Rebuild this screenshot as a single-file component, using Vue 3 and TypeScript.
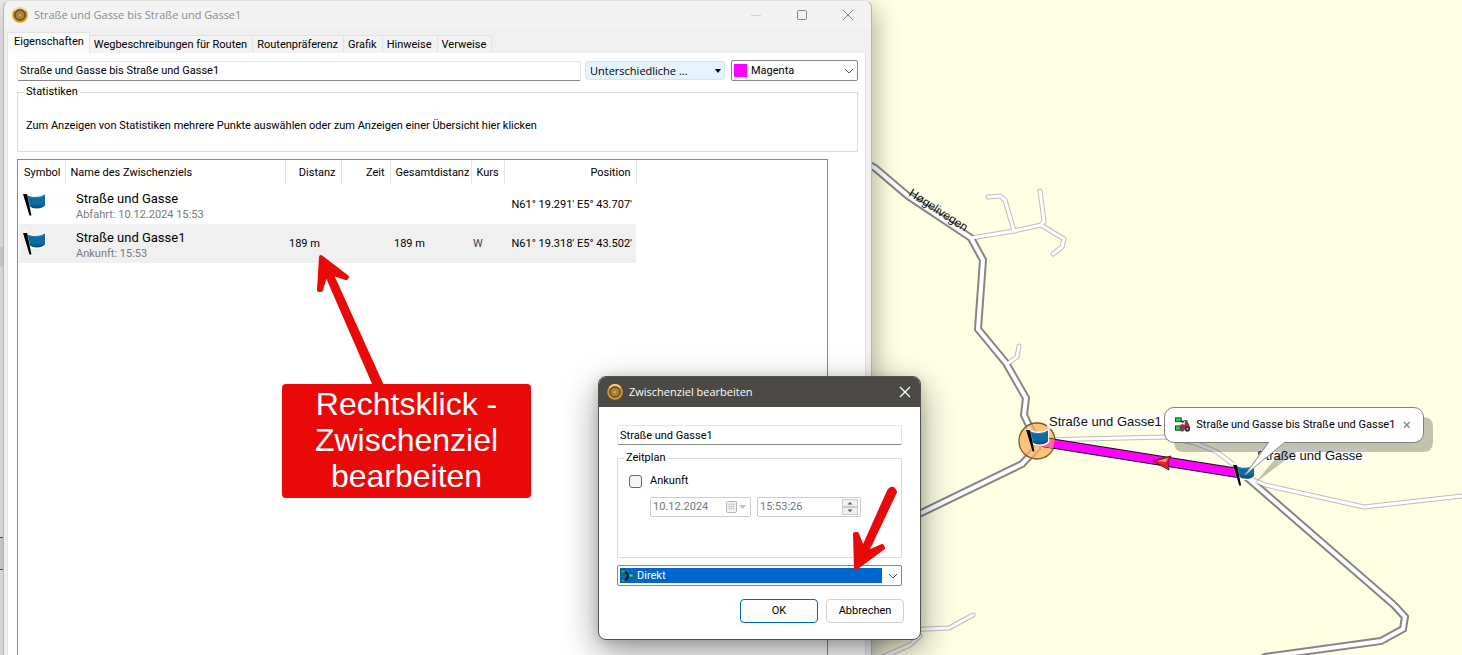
<script setup lang="ts">
import { ref } from 'vue'

interface Waypoint {
  name: string
  note: string
  distance: string
  time: string
  total: string
  course: string
  position: string
}

const tabs: string[] = [
  'Eigenschaften',
  'Wegbeschreibungen für Routen',
  'Routenpräferenz',
  'Grafik',
  'Hinweise',
  'Verweise',
]
const activeTab = ref(0)
const selectedRow = ref(1)
const routeName = ref('Straße und Gasse bis Straße und Gasse1')
const waypointName = ref('Straße und Gasse1')
const arrival = ref(false)

const waypoints: Waypoint[] = [
  {
    name: 'Straße und Gasse',
    note: 'Abfahrt: 10.12.2024 15:53',
    distance: '',
    time: '',
    total: '',
    course: '',
    position: "N61° 19.291' E5° 43.707'",
  },
  {
    name: 'Straße und Gasse1',
    note: 'Ankunft: 15:53',
    distance: '189 m',
    time: '',
    total: '189 m',
    course: 'W',
    position: "N61° 19.318' E5° 43.502'",
  },
]

const mainRoads: string[] = [
  'M866 163 L875 168 L908 196 L971 238 L983 260 L978 329 L1006 363 L1026 398 L1024 415 L1035 438 L1037 448 L1022 464 L915 516',
  'M1243 474 L1394 605 L1405 617 L1403 629 L1381 641 L1265 657',
]
const sideRoads: string[] = [
  'M971 238 L1014 231 L1041 225 L1064 239 L1062 247 L1053 254',
  'M1014 231 L1005 200 L1000 196 L988 197',
  'M1041 225 L1044 221 L1040 191',
  'M1007 364 L1017 357 L1019 346',
  'M1040 440 L1165 437 L1195 443 L1217 452 L1234 465 L1247 477 L1265 485 L1364 507 L1470 495',
  'M905 630 L949 628 L973 615',
  'M920 636 L910 645 L880 658',
]
</script>

<template>
  <main class="desktop">
    <svg class="canvas" viewBox="0 0 1462 655" preserveAspectRatio="xMinYMin slice" role="img" aria-label="Karte">
      <defs>
        <linearGradient id="flagFill" x1="0" y1="0" x2="0" y2="1">
          <stop offset="0" stop-color="#0f5f96" />
          <stop offset="0.6" stop-color="#0b70ac" />
          <stop offset="1" stop-color="#07486f" />
        </linearGradient>
        <symbol id="flag" viewBox="0 0 24 24" overflow="visible">
          <path d="M3.500 1.500 Q6 4 12 4 Q18 4 22 1.500 V12.500 Q19 15.500 14 15.500 Q9 15.500 6 13 Z" fill="url(#flagFill)" stroke="#fff" stroke-width="2.500" paint-order="stroke" />
          <path d="M5 3.500 Q13 6.500 21.500 3" fill="none" stroke="#2b83b8" stroke-width="1" />
          <path d="M0 1 L4 1 L8.500 22.500 L6.500 22.500 Z" fill="#000" stroke="#fff" stroke-width="0.500" paint-order="stroke" />
        </symbol>
        <symbol id="globe" viewBox="0 0 16 16">
          <circle cx="8" cy="8" r="7.800" fill="#e8940f" />
          <path d="M2.500 3.500 A7 7 0 0 1 13.500 3.500" fill="none" stroke="#ffdf92" stroke-width="1.500" />
          <circle cx="8" cy="8" r="5.800" fill="#414d50" />
          <circle cx="8" cy="8" r="4.600" fill="#717b6c" />
          <circle cx="8" cy="8" r="3.800" fill="#c98a23" />
          <path d="M4.500 8 H11.500 M8 4.500 V11.500 M5.500 5.500 L10.500 10.500 M10.500 5.500 L5.500 10.500" stroke="#7d6435" stroke-width="0.700" />
          <circle cx="8" cy="8" r="1.500" fill="#e79e2c" />
        </symbol>
      </defs>
      <g fill="none" stroke-linejoin="round" stroke-linecap="round">
        <path v-for="d in sideRoads" :key="'e' + d" :d="d" stroke="#bdbdbd" stroke-width="5" />
        <path v-for="d in mainRoads" :key="'m' + d" :d="d" stroke="#858585" stroke-width="8" stroke-linejoin="miter" />
        <path v-for="d in sideRoads" :key="'i' + d" :d="d" stroke="#fff" stroke-width="3" />
        <path v-for="d in mainRoads" :key="'n' + d" :d="d" stroke="#fff" stroke-width="4" stroke-linejoin="miter" />
      </g>
      <text class="map-text street" transform="translate(908 195) rotate(33)">Høgelivegen</text>
      <circle cx="1037" cy="441" r="18" fill="#ffad55" fill-opacity="0.75" stroke="#7d5a2c" stroke-width="1.300" />
      <path d="M1043 442 L1238 473" stroke="#111" stroke-width="10" />
      <path d="M1043 442 L1238 473" stroke="#f0f" stroke-width="8" />
      <path d="M1037 441 L1054 444" stroke="#ff6d8e" stroke-width="9" />
      <path d="M1153 461 L1171 456 L1168 462 L1169 470 Z" fill="#e3222d" stroke="#6b1018" />
      <path d="M1157 461 L1168 458 L1166 462 Z" fill="#ff8c8c" />
      <rect x="1047" y="414" width="118" height="15" rx="3" fill="#fff" fill-opacity="0.8" />
      <text class="map-text" x="1049" y="426">Straße und Gasse1</text>
      <rect x="1255" y="448" width="112" height="16" rx="3" fill="#fff" fill-opacity="0.8" />
      <text class="map-text" x="1257" y="460">Straße und Gasse</text>
      <use href="#flag" x="1026" y="429" width="24" height="24" />
      <use href="#flag" x="1233" y="464" width="23" height="23" />
      <path d="M1184 417 H1423 Q1433 417 1433 427 V442 Q1433 452 1423 452 H1296 L1254 484 L1281 452 H1184 Q1174 452 1174 442 V427 Q1174 417 1184 417 Z" fill="#000" fill-opacity="0.24" />
      <path d="M1270 440 L1245 475 L1287 440 Z" fill="#fff" stroke="#888" />
    </svg>

    <aside class="callout">
      <svg class="callout-icon" viewBox="0 0 16 16" aria-hidden="true">
        <path d="M5 3 L9 5 M5 11 H8" stroke="#222" stroke-width="2" fill="none" />
        <rect x="0.500" y="0.500" width="6" height="4" fill="#27d34a" stroke="#164d20" />
        <rect x="0.500" y="9" width="5" height="4.500" fill="#27d34a" stroke="#164d20" />
        <path d="M5 8 L8 7 L10 8 L10.500 3.500 L13 4 L15 8 L15.500 11 L6 12.500 Z" fill="#b92737" />
        <path d="M9 3.500 H13" stroke="#555" stroke-width="1.200" />
        <circle cx="7.500" cy="12.500" r="2.500" fill="#54545c" />
        <circle cx="13" cy="12" r="3" fill="#33333a" />
        <circle cx="13" cy="12" r="1" fill="#bbb" />
      </svg>
      <span>Straße und Gasse bis Straße und Gasse1</span>
      <button class="callout-close" type="button" aria-label="Hinweis schließen">
        <svg viewBox="0 0 8 8" aria-hidden="true"><path d="M1 1 L7 7 M7 1 L1 7" stroke="#8a8a8a" stroke-width="1.500" /></svg>
      </button>
    </aside>
    <svg class="canvas overlay" viewBox="0 0 1462 655" preserveAspectRatio="xMinYMin slice" aria-hidden="true">
      <path d="M1270 441 L1245 475 L1286 441 Z" fill="#fff" />
      <path d="M1269 442 L1245 475 L1285 442" fill="none" stroke="#999" />
    </svg>

    <div class="edge" aria-hidden="true"><i></i><b></b></div>

    <section class="window">
      <header class="titlebar">
        <svg class="app-icon" aria-hidden="true"><use href="#globe" /></svg>
        <h1>Straße und Gasse bis Straße und Gasse1</h1>
        <button type="button" aria-label="Minimieren">
          <svg viewBox="0 0 12 12" aria-hidden="true"><path d="M1 6.500 H11" stroke="#d6d6d6" /></svg>
        </button>
        <button type="button" aria-label="Maximieren">
          <svg viewBox="0 0 12 12" aria-hidden="true"><rect x="1.500" y="1.500" width="9" height="9" rx="1" fill="none" stroke="#858585" /></svg>
        </button>
        <button type="button" aria-label="Schließen">
          <svg viewBox="0 0 12 12" aria-hidden="true"><path d="M1 1 L11 11 M11 1 L1 11" stroke="#858585" /></svg>
        </button>
      </header>

      <nav class="tabs" role="tablist">
        <button
          v-for="(tab, i) in tabs"
          :key="tab"
          type="button"
          role="tab"
          :aria-selected="i === activeTab"
          :class="['tab', { active: i === activeTab }]"
          @click="activeTab = i"
        >{{ tab }}</button>
      </nav>

      <div class="panel">
        <div class="toolbar">
          <input v-model="routeName" class="field name" type="text" aria-label="Routenname" />
          <button class="activity" type="button">
            <span>Unterschiedliche ...</span>
            <svg viewBox="0 0 6 4" aria-hidden="true"><path d="M0 0 H6 L3 4 Z" /></svg>
          </button>
          <label class="combo color">
            <i class="swatch"></i>
            <select aria-label="Farbe">
              <option>Magenta</option>
            </select>
            <svg class="chevron" viewBox="0 0 10 6" aria-hidden="true"><path d="M1 1 L5 5 L9 1" fill="none" stroke="#555" /></svg>
          </label>
        </div>

        <fieldset class="group stats">
          <legend>Statistiken</legend>
          <p>Zum Anzeigen von Statistiken mehrere Punkte auswählen oder zum Anzeigen einer Übersicht hier klicken</p>
        </fieldset>

        <div class="list">
          <table>
            <colgroup>
              <col class="c-symbol" /><col class="c-name" /><col class="c-dist" /><col class="c-time" /><col class="c-total" /><col class="c-course" /><col class="c-pos" />
            </colgroup>
            <thead>
              <tr>
                <th scope="col">Symbol</th>
                <th scope="col">Name des Zwischenziels</th>
                <th scope="col" class="end">Distanz</th>
                <th scope="col" class="end">Zeit</th>
                <th scope="col">Gesamtdistanz</th>
                <th scope="col">Kurs</th>
                <th scope="col" class="end">Position</th>
              </tr>
            </thead>
            <tbody>
              <tr v-for="(w, i) in waypoints" :key="w.name" :class="{ selected: i === selectedRow }" @click="selectedRow = i">
                <td><svg class="row-flag" aria-hidden="true"><use href="#flag" /></svg></td>
                <td class="title">
                  <strong>{{ w.name }}</strong>
                  <small>{{ w.note }}</small>
                </td>
                <td>{{ w.distance }}</td>
                <td>{{ w.time }}</td>
                <td>{{ w.total }}</td>
                <td class="course">{{ w.course }}</td>
                <td class="pos">{{ w.position }}</td>
              </tr>
            </tbody>
          </table>
        </div>
      </div>
    </section>

    <section class="dialog" role="dialog" aria-labelledby="dialogTitle">
      <header class="dialog-bar">
        <svg class="app-icon" aria-hidden="true"><use href="#globe" /></svg>
        <h2 id="dialogTitle">Zwischenziel bearbeiten</h2>
        <button type="button" aria-label="Dialog schließen">
          <svg viewBox="0 0 12 12" aria-hidden="true"><path d="M1 1 L11 11 M11 1 L1 11" stroke="#fff" stroke-width="1.200" /></svg>
        </button>
      </header>
      <form class="dialog-body" @submit.prevent>
        <input v-model="waypointName" class="field" type="text" aria-label="Name des Zwischenziels" />
        <fieldset class="group plan">
          <legend>Zeitplan</legend>
          <label class="check"><input v-model="arrival" type="checkbox" /><span>Ankunft</span></label>
          <div class="times">
            <div class="time-box">
              <input type="text" value="10.12.2024" disabled aria-label="Datum" />
              <svg class="calendar" viewBox="0 0 22 14" aria-hidden="true">
                <rect x="0.500" y="1.500" width="10" height="11" rx="1" fill="#f4f4f4" stroke="#b5b5b5" />
                <path d="M2 4.500 H9 M2 6.500 H9 M2 8.500 H9 M3.500 3 V10 M5.500 3 V10 M7.500 3 V10" stroke="#d0d0d0" stroke-width="0.800" />
                <path d="M13 5 H20 L16.500 9 Z" fill="#c3c3c3" />
              </svg>
            </div>
            <div class="time-box wide">
              <input type="text" value="15:53:26" disabled aria-label="Uhrzeit" />
              <svg class="spinner" viewBox="0 0 16 16" aria-hidden="true">
                <rect x="0.500" y="0.500" width="15" height="7" fill="#f0f0f0" stroke="#ccc" />
                <rect x="0.500" y="8.500" width="15" height="7" fill="#f0f0f0" stroke="#ccc" />
                <path d="M5.500 5.500 H10.500 L8 3 Z M5.500 10.500 H10.500 L8 13 Z" fill="#555" />
              </svg>
            </div>
          </div>
        </fieldset>
        <label class="combo transport">
          <span class="highlight">
            <svg viewBox="0 0 14 14" aria-hidden="true">
              <path d="M4 3 L7 4 L8 7 H10 M4 11 L7 10 L8 7" fill="none" stroke="#111" stroke-width="2" />
              <rect x="1" y="1" width="4" height="3" fill="#2fae4e" stroke="#103c1b" stroke-width="0.500" />
              <rect x="1" y="10" width="4" height="3" fill="#2fae4e" stroke="#103c1b" stroke-width="0.500" />
              <rect x="9" y="5" width="4" height="3" fill="#49d96b" stroke="#103c1b" stroke-width="0.500" />
            </svg>
            <select aria-label="Routenaktivität">
              <option>Direkt</option>
            </select>
          </span>
          <svg class="chevron" viewBox="0 0 10 6" aria-hidden="true"><path d="M1 1 L5 5 L9 1" fill="none" stroke="#555" /></svg>
        </label>
        <div class="actions">
          <button type="submit" class="primary">OK</button>
          <button type="button">Abbrechen</button>
        </div>
      </form>
    </section>

    <svg class="canvas overlay" viewBox="0 0 1462 655" preserveAspectRatio="xMinYMin slice" aria-hidden="true">
      <g fill="#ea0909" stroke="#ea0909" stroke-width="4" stroke-linejoin="round">
        <path d="M321 257 L347 277 L346 278 L331 273 L383 388 L376 388 L326 273 L321 290 L319 290 Z" />
        <path d="M856 568 L855 534 L857 534 L863 549 L889 491 Q892 487 894 490 L895 492 L866 553 L882 546 L883 548 Z" />
      </g>
    </svg>
    <p class="note">Rechtsklick - Zwischenziel bearbeiten</p>
  </main>
</template>

<style>
html,
body {
  margin: 0;
  overflow: hidden;
}
</style>

<style scoped>
* {
  box-sizing: border-box;
}

.desktop {
  position: relative;
  height: 100vh;
  overflow: hidden;
  background: #ffffe4;
  color: #000;
  font: 11px/16px Roboto, "Liberation Sans", sans-serif;
}

button,
input,
select {
  margin: 0;
  padding: 0;
  border: 0;
  background: none;
  color: inherit;
  font: inherit;
}

svg {
  display: block;
}

.canvas {
  position: absolute;
  inset: 0;
  width: 100%;
  height: 100%;
}

.overlay {
  pointer-events: none;
}

.map-text {
  font: 13px "Liberation Sans", sans-serif;
  fill: #111;
}

.street {
  font-size: 12px;
}

.callout {
  position: absolute;
  left: 1164px;
  top: 407px;
  display: flex;
  align-items: center;
  width: 260px;
  height: 36px;
  padding: 0 10px;
  gap: 6px;
  border: 1px solid #808080;
  border-radius: 10px;
  background: #fff;
  white-space: nowrap;
}

.callout-icon {
  width: 16px;
  height: 16px;
}

.callout span {
  flex: 1;
}

.callout-close {
  width: 12px;
  height: 12px;
  padding: 2px;
}

.edge {
  position: absolute;
  left: 0;
  top: 0;
  bottom: 0;
  width: 12px;
  background: #ebebeb;
}

.edge i {
  position: absolute;
  top: 247px;
  width: 4px;
  height: 20px;
  background: #d9d9d9;
}

.edge b {
  position: absolute;
  top: 537px;
  width: 4px;
  height: 33px;
  border: solid #555;
  border-width: 1px 0;
  background: #d9d9d9;
}

.window {
  position: absolute;
  left: 3px;
  top: 0;
  bottom: -12px;
  display: flex;
  flex-direction: column;
  width: 869px;
  border: 1px solid #b5b5b5;
  border-top-color: #e0e0e0;
  border-radius: 8px 8px 0 0;
  background: #f0f0f0;
  box-shadow: 4px 8px 24px rgba(0, 0, 0, 0.3);
}

.titlebar {
  display: flex;
  align-items: center;
  height: 28px;
  padding-left: 8px;
  border-radius: 8px 8px 0 0;
  background: #f3f3f3;
  color: #8c8c8c;
}

.app-icon {
  width: 16px;
  height: 16px;
}

.titlebar h1,
.dialog-bar h2 {
  flex: 1;
  margin: 0 0 0 6px;
  font: 11px/16px "Open Sans", "Noto Sans", sans-serif;
}

.titlebar button {
  display: grid;
  place-items: center;
  width: 46px;
  height: 28px;
}

.titlebar button svg {
  width: 12px;
  height: 12px;
}

.tabs {
  display: flex;
  align-items: flex-end;
  height: 24px;
  padding-left: 3px;
}

.tab {
  height: 18px;
  padding: 0 5px 0 4px;
  border: 1px solid #e3e3e3;
  border-width: 1px 1px 0 0;
  background: #f3f3f3;
  white-space: nowrap;
}

.tab.active {
  height: 21px;
  padding: 0 5px 2px 6px;
  border-left-width: 1px;
  background: #fbfbfb;
}

.panel {
  display: flex;
  flex: 1;
  flex-direction: column;
  min-height: 0;
  margin: 0 5px 0 3px;
  padding: 7px 7px 0 9px;
  border: 1px solid #e3e3e3;
  border-top: 0;
  background: #fff;
}

.toolbar {
  display: flex;
  align-items: center;
  gap: 4px;
}

.field {
  width: 100%;
  height: 20px;
  padding: 0 2px;
  border: 1px solid #e5e5e5;
  border-bottom-color: #868686;
  border-radius: 2px;
  background: #fff;
}

.field.name {
  flex: 1;
  width: auto;
  min-width: 0;
}

.activity {
  display: flex;
  align-items: center;
  justify-content: space-between;
  width: 140px;
  height: 19px;
  padding: 0 3px 0 4px;
  border: 1px solid #cce8ff;
  border-radius: 3px;
  background: #e5f3ff;
  font: 11px/16px "Open Sans", "Noto Sans", sans-serif;
}

.activity svg {
  width: 6px;
  height: 4px;
}

.combo {
  display: flex;
  align-items: center;
  height: 21px;
  padding: 0 3px 0 2px;
  border: 1px solid #868686;
  border-radius: 2px;
  background: #fff;
}

.combo select {
  flex: 1;
  min-width: 0;
  appearance: none;
}

.color {
  width: 127px;
  margin-left: 2px;
}

.swatch {
  width: 13px;
  height: 13px;
  margin-right: 4px;
  background: #f0f;
}

.chevron {
  width: 10px;
  height: 6px;
}

.group {
  min-width: 0;
  margin: 0;
  border: 1px solid #dcdcdc;
}

.group legend {
  padding: 0 2px;
}

.stats {
  height: 68px;
  margin-top: 3px;
  padding: 0 6px;
}

.stats p {
  margin: 18px 2px 0;
  white-space: nowrap;
}

.list {
  flex: 1;
  margin: 7px 30px 0 0;
  padding-left: 1px;
  border: 1px solid #828790;
  overflow: hidden;
}

table {
  width: 617px;
  border-collapse: collapse;
  table-layout: fixed;
}

.c-symbol { width: 46px; }
.c-name { width: 220px; }
.c-dist { width: 56px; }
.c-time { width: 49px; }
.c-total { width: 81px; }
.c-course { width: 33px; }
.c-pos { width: 132px; }

th {
  height: 25px;
  padding: 0 5px;
  border-right: 1px solid #e5e5e5;
  font-weight: 400;
  text-align: left;
  white-space: nowrap;
}

th.end {
  text-align: right;
}

td {
  height: 39px;
  padding: 0 4px;
  white-space: nowrap;
}

.selected {
  background: #f0f0f0;
}

.row-flag {
  width: 24px;
  height: 24px;
  overflow: visible;
}

.title {
  padding: 3px 4px 0 11px;
}

.title strong,
.title small {
  display: block;
  font: 13px/16px Roboto, "Liberation Sans", sans-serif;
}

.title small {
  color: #7a7a7a;
  font-size: 11px;
  line-height: 15px;
}

.course {
  padding-left: 2px;
  color: #444;
}

.pos {
  text-align: right;
}

.dialog {
  position: absolute;
  left: 598px;
  top: 376px;
  width: 323px;
  border: 1px solid #555350;
  border-radius: 8px;
  background: #fff;
  box-shadow: 0 12px 36px rgba(0, 0, 0, 0.4), 0 2px 12px rgba(0, 0, 0, 0.15);
  overflow: hidden;
}

.dialog-bar {
  display: flex;
  align-items: center;
  height: 30px;
  padding: 0 9px 0 8px;
  background: #4b4946;
  color: #fff;
}

.dialog-bar button svg {
  width: 12px;
  height: 12px;
}

.dialog-body {
  display: flex;
  flex-direction: column;
  padding: 18px 18px 16px;
}

.plan {
  height: 108px;
  margin-top: 5px;
  padding: 0 6px;
}

.check {
  display: flex;
  align-items: center;
  gap: 8px;
  margin: 7px 0 0 5px;
}

.check input {
  appearance: none;
  width: 13px;
  height: 13px;
  border: 1px solid #666;
  border-radius: 3px;
  background: #f6f6f6;
}

.times {
  display: flex;
  gap: 6px;
  margin: 8px 0 0 26px;
}

.time-box {
  display: flex;
  align-items: center;
  width: 101px;
  height: 20px;
  padding: 0 2px;
  border: 1px solid #ccc;
  border-radius: 2px;
  color: #777;
}

.time-box.wide {
  width: 104px;
}

.time-box input {
  flex: 1;
  min-width: 0;
}

.calendar {
  width: 22px;
  height: 14px;
}

.spinner {
  width: 16px;
  height: 16px;
}

.transport {
  margin-top: 7px;
}

.highlight {
  display: flex;
  flex: 1;
  align-items: center;
  gap: 3px;
  height: 15px;
  margin-right: 6px;
  background: #0066cc;
  color: #fff;
}

.highlight svg {
  width: 14px;
  height: 14px;
}

.actions {
  display: flex;
  justify-content: flex-end;
  gap: 8px;
  margin: 13px -2px 0 0;
}

.actions button {
  width: 78px;
  height: 24px;
  border: 1px solid #d0d0d0;
  border-radius: 4px;
  background: #fdfdfd;
}

.actions .primary {
  border-color: #0067c0;
}

.note {
  position: absolute;
  left: 282px;
  top: 384px;
  width: 249px;
  margin: 0;
  padding: 2px 24px 4px;
  border-radius: 4px;
  background: #ea0909;
  color: #fff;
  font: 32px/36px "Liberation Sans", sans-serif;
  text-align: center;
}
</style>
